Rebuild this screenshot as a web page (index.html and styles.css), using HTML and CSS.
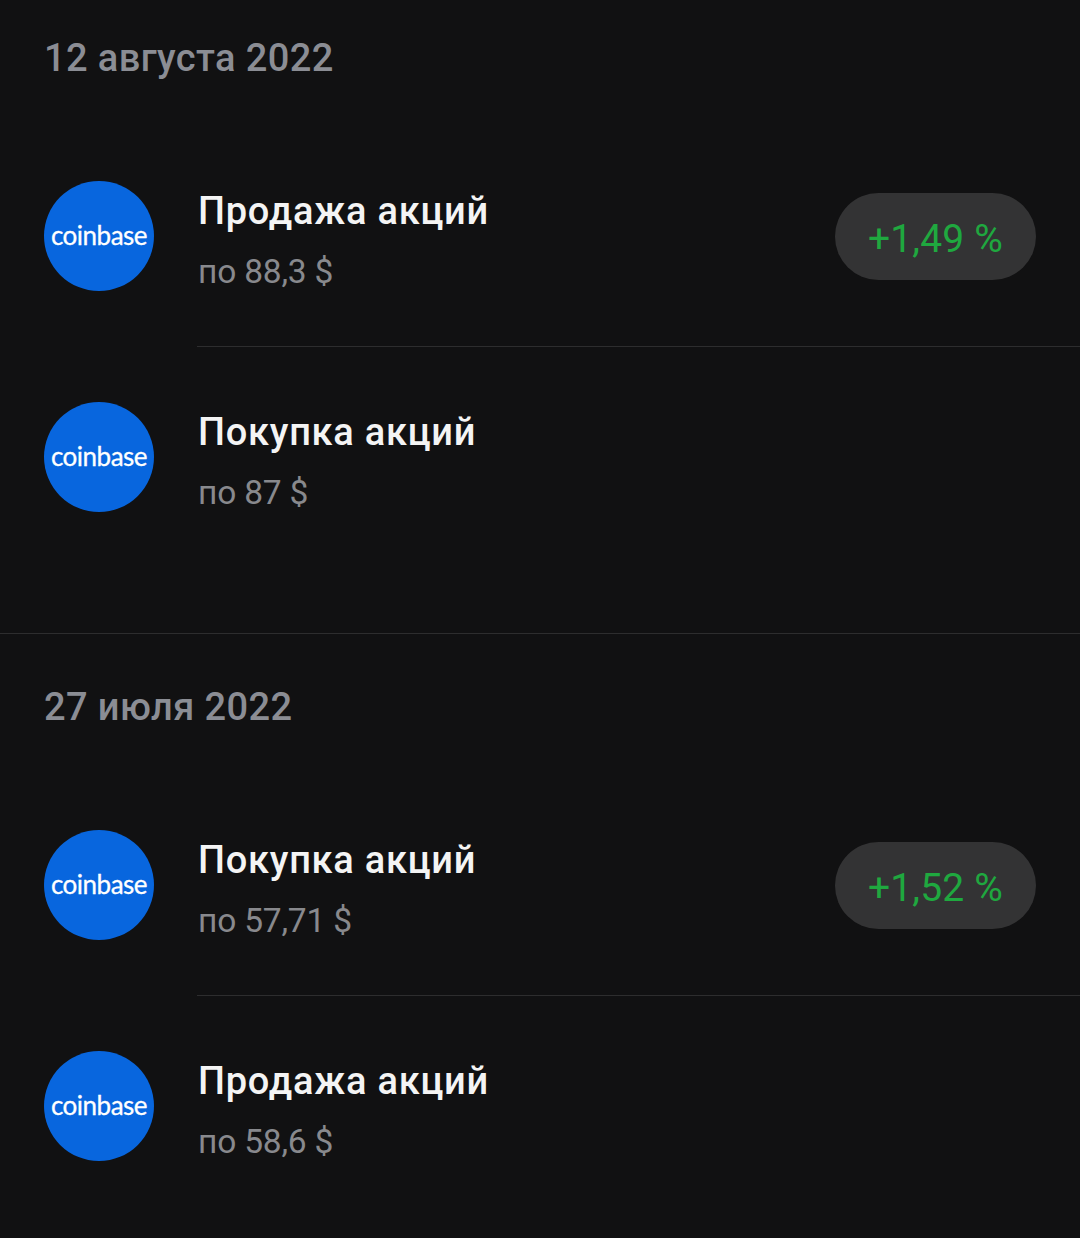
FILE: index.html
```html
<!DOCTYPE html>
<html lang="ru">
<head>
    <meta charset="UTF-8">
    <meta name="viewport" content="width=device-width, initial-scale=1.0">
    <title>Операции</title>
    <link rel="stylesheet" href="styles.css">
</head>
<body>
    <section class="day day-first">
        <h2 class="date">12 августа 2022</h2>
        <div class="row">
            <div class="logo">coinbase</div>
            <div class="info">
                <div class="title">Продажа акций</div>
                <div class="price">по 88,3 $</div>
            </div>
            <div class="badge">+1,49 %</div>
        </div>
        <div class="row">
            <div class="logo">coinbase</div>
            <div class="info">
                <div class="title">Покупка акций</div>
                <div class="price">по 87 $</div>
            </div>
        </div>
    </section>
    <section class="day">
        <h2 class="date">27 июля 2022</h2>
        <div class="row">
            <div class="logo">coinbase</div>
            <div class="info">
                <div class="title">Покупка акций</div>
                <div class="price">по 57,71 $</div>
            </div>
            <div class="badge">+1,52 %</div>
        </div>
        <div class="row">
            <div class="logo">coinbase</div>
            <div class="info">
                <div class="title">Продажа акций</div>
                <div class="price">по 58,6 $</div>
            </div>
        </div>
    </section>
</body>
</html>
```

FILE: styles.css
```css
html, body {
    height: 100%;
    overflow: hidden;
}
body {
    font-family: Roboto, "Noto Sans", sans-serif;
    background-color: #111112;
    margin: 0;
    padding: 0;
}
.day {
    padding-bottom: 66px;
    border-bottom: 1px solid #2d2d2e;
}
.day-first {
    margin-top: -15px;
}
.date {
    margin: 0;
    height: 141px;
    padding-top: 51px;
    box-sizing: border-box;
    padding-left: 44px;
    font-size: 38px;
    line-height: 44px;
    font-weight: 500;
    letter-spacing: 0.4px;
    color: #8b8d94;
}
.row {
    height: 220px;
    display: flex;
    align-items: center;
    padding-left: 44px;
    padding-right: 44px;
    position: relative;
}
.row + .row {
    border-top: 1px solid #2d2d2e;
}
.row + .row::before {
    content: "";
    position: absolute;
    top: -1px;
    left: 0;
    width: 197px;
    height: 1px;
    background-color: #111112;
}
.logo {
    width: 110px;
    height: 110px;
    border-radius: 50%;
    background-color: #0866de;
    color: #fff;
    font-family: Lato, "Open Sans", sans-serif;
    font-size: 26px;
    line-height: 26px;
    letter-spacing: -0.5px;
    -webkit-text-stroke: 0.3px #fff;
    padding-bottom: 2px;
    box-sizing: border-box;
    display: flex;
    align-items: center;
    justify-content: center;
    flex-shrink: 0;
}
.info {
    margin-left: 44px;
    flex-grow: 1;
    padding-top: 9px;
}
.title {
    font-size: 38px;
    line-height: 44px;
    font-weight: 500;
    color: #f4f4f4;
    letter-spacing: 0.75px;
    margin-top: -1px;
}
.price {
    margin-top: 19px;
    font-size: 33.5px;
    line-height: 40px;
    color: #88898d;
    letter-spacing: -0.2px;
}
.badge {
    width: 201px;
    height: 87px;
    border-radius: 44px;
    background-color: #333334;
    color: #1fa83f;
    font-size: 39px;
    letter-spacing: 0.2px;
    padding-top: 6px;
    box-sizing: border-box;
    display: flex;
    align-items: center;
    justify-content: center;
    flex-shrink: 0;
}
```
